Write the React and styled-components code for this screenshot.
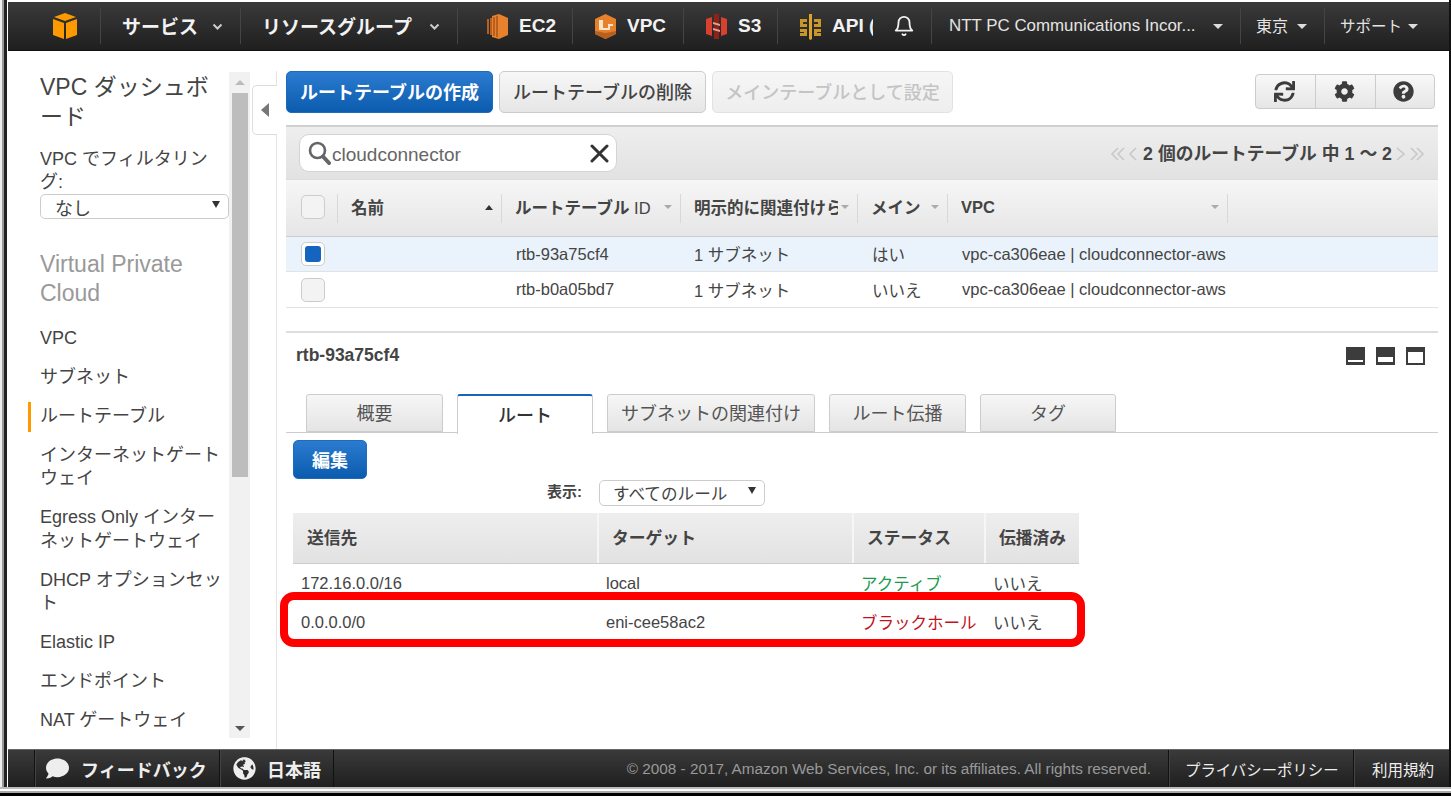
import React from 'react';
import styled, { createGlobalStyle, css } from 'styled-components';
import { FaSync, FaCog, FaQuestionCircle, FaComment, FaGlobeAmericas } from 'react-icons/fa';
import { FiBell } from 'react-icons/fi';

const FONT = '"Liberation Sans", "Noto Sans CJK JP", sans-serif';

const GlobalStyle = createGlobalStyle`
  html, body { margin: 0; padding: 0; background: #fff; }
  body { font-family: ${FONT}; color: #444; overflow: hidden; }
  * { box-sizing: border-box; }
`;

const Frame = styled.div`
  width: 1451px;
  height: 796px;
  padding: 2px 2px 9px 8px;
  display: flex;
  flex-direction: column;
  background:
    linear-gradient(90deg, #eee 0 2px, #999 2px 4px, #222 4px 7px, #fff 7px 1449px, #111 1449px) 0 0 / 100% 787px no-repeat,
    linear-gradient(180deg, #000 0 2px, #fff 2px 787px, #bbb 787px 789px, #fff 789px 791px, #aaa 791px 793px, #000 793px);
`;

const TopBar = styled.nav`
  height: 49px;
  flex: none;
  display: flex;
  align-items: center;
  background: linear-gradient(180deg, #3a3a3a, #1f1f1f);
  border-bottom: 1px solid #111;
  color: #fff;
`;

const NavItem = styled.div`
  width: ${({ $w }) => $w}px;
  height: 36px;
  padding-left: ${({ $pad }) => $pad ?? 21}px;
  flex: none;
  display: flex;
  align-items: center;
  overflow: hidden;
  white-space: nowrap;
  border-right: ${({ $plain }) => ($plain ? 'none' : '1px solid #444')};
  font-size: ${({ $size }) => $size || 19}px;
  font-weight: ${({ $size }) => ($size ? 400 : 700)};
  color: ${({ $size }) => ($size ? '#e4e4e4' : '#f2f2f2')};
`;

const NavLabel = styled.span`
  flex: 1;
  padding-bottom: ${({ $lift }) => ($lift ? 2 : 0)}px;
`;

const NavCaret = styled.span`
  width: 0;
  height: 0;
  flex: none;
  margin-right: ${({ $right }) => $right}px;
  border-left: 5px solid transparent;
  border-right: 5px solid transparent;
  border-top: 5px solid #ddd;
`;

const ChevronSvg = styled.svg`
  width: 11px;
  height: 7px;
  flex: none;
  margin-right: ${({ $right }) => $right}px;
`;

const ServiceIcon = styled.svg`
  width: ${({ $w }) => $w || 23}px;
  height: 27px;
  flex: none;
  margin-right: 10px;
`;

const Body = styled.div`
  flex: 1;
  min-height: 0;
  display: flex;
`;

const Sidebar = styled.aside`
  width: 242px;
  flex: none;
  height: 666px;
  margin-top: 21px;
  display: flex;
  overflow: hidden;
`;

const SideContent = styled.div`
  width: 221px;
  flex: none;
  padding: 0 0 0 32px;
`;

const SideTitle = styled.div`
  font-size: 23px;
  line-height: 29.5px;
  color: #444;
  margin-top: 1px;
`;

const FilterLabel = styled.div`
  font-size: 18px;
  line-height: 23px;
  color: #444;
  margin-top: 16px;
`;

const NativeSelect = styled.div`
  position: relative;
  height: ${({ $h }) => $h}px;
  width: ${({ $w }) => $w}px;
  padding: 3px 0 0 ${({ $pad }) => $pad}px;
  border: 1px solid #ccc;
  border-radius: 5px;
  background: #fff;
  font-size: ${({ $size }) => $size}px;
  line-height: 22px;
  color: #444;
  overflow: hidden;

  &::after {
    content: '';
    position: absolute;
    right: 8px;
    top: 6px;
    border-left: 4px solid transparent;
    border-right: 4px solid transparent;
    border-top: 7px solid #333;
  }
`;

const SideSection = styled.div`
  font-size: 23px;
  line-height: 29px;
  color: #999;
  margin: 31px 0 11px;
`;

const SideItem = styled.div`
  position: relative;
  font-size: 18px;
  line-height: 23.5px;
  padding: 7.75px 0;
  color: #444;

  ${({ $active }) =>
    $active &&
    css`
      &::before {
        content: '';
        position: absolute;
        left: -12px;
        top: 5px;
        bottom: 4px;
        width: 3px;
        background: #f90;
      }
    `}
`;

const ScrollTrack = styled.div`
  width: 21px;
  flex: none;
  background: #f1f1f1;
  display: flex;
  flex-direction: column;
  align-items: center;
`;

const ScrollArrow = styled.div`
  width: 0;
  height: 0;
  flex: none;
  margin: ${({ $down }) => ($down ? 'auto 0 7px' : '8px 0 0')};
  border-left: 5px solid transparent;
  border-right: 5px solid transparent;
  ${({ $down }) => ($down ? 'border-top: 5px solid #555;' : 'border-bottom: 5px solid #bbb;')}
`;

const ScrollThumb = styled.div`
  width: 16px;
  height: 384px;
  flex: none;
  margin-top: 8px;
  background: #bdbdbd;
`;

const Collapse = styled.div`
  width: 27px;
  flex: none;
  margin-top: 20px;
  padding: 14px 0 0 2px;
  border-right: 1px solid #e4e4e4;
`;

const CollapseHandle = styled.div`
  width: 25px;
  height: 50px;
  display: flex;
  align-items: center;
  justify-content: center;
  border: 1px solid #ddd;
  border-right: none;
  border-radius: 5px 0 0 5px;
  background: #fff;
`;

const LeftTriangle = styled.div`
  width: 0;
  height: 0;
  border-top: 7px solid transparent;
  border-bottom: 7px solid transparent;
  border-right: 8px solid #777;
`;

const Main = styled.main`
  width: 1161px;
  flex: none;
  padding: 20px 0 0 9px;
`;

const Toolbar = styled.div`
  width: 1152px;
  height: 42px;
  display: flex;
  align-items: flex-start;
  gap: 6px;
`;

const buttonBase = css`
  display: flex;
  align-items: center;
  justify-content: center;
  padding-bottom: 2px;
  border-radius: 5px;
  font-size: 18px;
  white-space: nowrap;
`;

const PrimaryButton = styled.div`
  ${buttonBase}
  width: ${({ $w }) => $w}px;
  height: ${({ $h }) => $h}px;
  margin: ${({ $m }) => $m || 0};
  background: linear-gradient(180deg, #2b7bd0, #0b5cae);
  border: 1px solid #1d6bbd;
  color: #fff;
  font-weight: 700;
`;

const GrayButton = styled.div`
  ${buttonBase}
  width: ${({ $w }) => $w}px;
  height: 42px;
  background: linear-gradient(180deg, #f7f7f7, #e6e6e6);
  border: 1px solid #ccc;
  color: ${({ $disabled }) => ($disabled ? '#c4c4c4' : '#444')};
  font-weight: 500;
  ${({ $disabled }) => $disabled && 'border-color: #e2e2e2; background: linear-gradient(180deg, #f6f6f6, #eee);'}
`;

const IconGroup = styled.div`
  display: flex;
  margin: 3px 3px 0 auto;
  height: 35px;
  border: 1px solid #ccc;
  border-radius: 4px;
  background: linear-gradient(180deg, #f8f8f8, #e6e6e6);
`;

const IconCell = styled.div`
  width: 59.3px;
  padding-right: 2px;
  display: flex;
  align-items: center;
  justify-content: center;
  color: #3c3c3c;
  font-size: 21px;

  & + & {
    border-left: 1px solid #ccc;
  }
`;

const FilterBar = styled.div`
  margin-top: 12px;
  width: 1152px;
  height: 55px;
  padding: 7px 12px 0 13px;
  display: flex;
  align-items: flex-start;
  border-top: 2px solid #d0d0d0;
  border-bottom: 1px solid #ddd;
  background: linear-gradient(180deg, #eee, #e2e2e2);
`;

const SearchBox = styled.div`
  width: 318px;
  height: 38px;
  padding: 0 7px 0 8px;
  display: flex;
  align-items: center;
  border: 1px solid #d4d4d4;
  border-radius: 10px;
  background: #fff;
  color: #666;
  font-size: 19px;
`;

const SearchText = styled.span`
  flex: 1;
  margin-left: 1px;
  padding-top: 3px;
`;

const Pager = styled.div`
  margin: 8px 0 0 auto;
  display: flex;
  align-items: center;
  font-size: 17.8px;
  line-height: 24px;
  font-weight: 700;
  color: #444;
`;

const PagerChevrons = styled.svg`
  width: 30px;
  height: 18px;
  flex: none;
  margin: ${({ $right }) => ($right ? '0 0 0 4px' : '0 3px 0 0')};
`;

const listColumns = '52px 164px 179px 177px 90px 280px 1fr';

const ListHead = styled.div`
  display: grid;
  grid-template-columns: ${listColumns};
  width: 1152px;
  height: 57px;
  border-bottom: 1px solid #ccc;
  background: linear-gradient(180deg, #f6f6f6, #e6e6e6);
`;

const HeadCell = styled.div`
  position: relative;
  display: flex;
  align-items: center;
  padding: 0 9px 2px 13px;
  font-size: 16.5px;
  font-weight: 700;
  color: #444;
  white-space: nowrap;
  overflow: hidden;

  &::after {
    content: '';
    display: ${({ $last }) => ($last ? 'none' : 'block')};
    position: absolute;
    right: 0;
    top: 14px;
    height: 29px;
    width: 1px;
    background: #d8d8d8;
    box-shadow: 1px 0 0 #fff;
  }
`;

const HeadLabel = styled.span`
  flex: 1;
  overflow: hidden;
`;

const HeadId = styled.span`
  font-weight: 400;
`;

const SortCaret = styled.span`
  width: 0;
  height: 0;
  flex: none;
  margin-left: 3px;
  border-left: 4px solid transparent;
  border-right: 4px solid transparent;
  ${({ $up }) => ($up ? 'border-bottom: 5px solid #333;' : 'border-top: 4px solid #aaa;')}
`;

const Check = styled.div`
  width: 24px;
  height: 24px;
  margin-left: 2px;
  padding: 3px;
  border: 1px solid #ccc;
  border-radius: 5px;
  background: ${({ $on }) => ($on ? '#fff' : '#f3f3f3')};
`;

const CheckFill = styled.div`
  width: 100%;
  height: 100%;
  border-radius: 3px;
  background: #1565c0;
`;

const ListRow = styled.div`
  display: grid;
  grid-template-columns: ${listColumns};
  width: 1152px;
  height: ${({ $h }) => $h}px;
  align-items: center;
  border-bottom: 1px solid #e2e2e2;
  background: ${({ $selected }) => ($selected ? '#eaf3fb' : '#fff')};
  font-size: 16.5px;
  color: #444;
  white-space: nowrap;
`;

const ListCell = styled.div`
  padding-left: ${({ $pad }) => $pad ?? 14}px;
  overflow: visible;
`;

const Detail = styled.section`
  margin-top: 23px;
  width: 1152px;
  border-top: 2px solid #ddd;
`;

const DetailHead = styled.div`
  height: 61px;
  padding: 0 13px 16px 10px;
  display: flex;
  align-items: center;
  justify-content: space-between;
  font-size: 17.5px;
  font-weight: 700;
  color: #444;
`;

const PaneIcons = styled.div`
  display: flex;
  gap: 11px;
  margin-top: 1px;
`;

const PaneIcon = styled.svg`
  width: 19px;
  height: 18px;
`;

const Tabs = styled.div`
  height: 39px;
  padding-left: 20px;
  display: flex;
  gap: 14px;
  border-bottom: 1px solid #ccc;
`;

const Tab = styled.div`
  width: ${({ $w }) => $w}px;
  height: ${({ $active }) => ($active ? 40 : 38)}px;
  padding-bottom: 3px;
  display: flex;
  align-items: center;
  justify-content: center;
  border: 1px solid #ccc;
  border-radius: 3px 3px 0 0;
  font-size: 18px;
  color: ${({ $active }) => ($active ? '#333' : '#555')};
  font-weight: ${({ $active }) => ($active ? 500 : 400)};
  background: ${({ $active }) => ($active ? '#fff' : 'linear-gradient(180deg, #f6f6f6, #e4e4e4)')};
  ${({ $active }) => $active && 'border-top: 2px solid #1166bb; border-bottom: none; z-index: 1;'}
`;

const ShowRow = styled.div`
  margin: 1px 0 0 261px;
  display: flex;
  gap: 17px;
`;

const ShowLabel = styled.div`
  font-size: 15px;
  line-height: 24px;
  font-weight: 700;
  color: #444;
`;

const RoutesTable = styled.div`
  position: relative;
  width: 786px;
  margin: 7px 0 0 7px;
`;

const routeColumns = '305px 255px 132px 94px';

const RouteHead = styled.div`
  display: grid;
  grid-template-columns: ${routeColumns};
  height: 51px;
  border-bottom: 1px solid #ccc;
  background: linear-gradient(180deg, #eee, #e2e2e2);
`;

const RouteHeadCell = styled.div`
  display: flex;
  align-items: center;
  padding: 0 0 3px 14px;
  font-size: 16.8px;
  font-weight: 700;
  color: #444;
  white-space: nowrap;

  & + & {
    margin-left: -1px;
    padding-left: 13px;
    border-left: 2px solid #f6f6f6;
  }
`;

const RouteRow = styled.div`
  display: grid;
  grid-template-columns: ${routeColumns};
  height: 39px;
  align-items: center;
  font-size: 16.5px;
  color: #444;
  white-space: nowrap;
`;

const RouteCell = styled.div`
  padding-left: 8px;
  color: ${({ $color }) => $color || '#444'};
`;

const RouteJp = styled(RouteCell)`
  padding-bottom: 2px;
`;

const Highlight = styled.div`
  position: absolute;
  left: -13px;
  top: 79px;
  width: 805px;
  height: 55px;
  border: 8px solid #f00;
  border-radius: 14px;
`;

const Footer = styled.footer`
  height: 38px;
  flex: none;
  display: flex;
  align-items: stretch;
  padding-left: 26px;
  border-top: 1px solid #666;
  background: linear-gradient(180deg, #3a3a3a, #1f1f1f);
`;

const FootItem = styled.div`
  width: ${({ $w }) => $w}px;
  flex: none;
  display: flex;
  align-items: center;
  padding-left: ${({ $pad }) => $pad}px;
  border-left: 1px solid #111;
  box-shadow: inset 1px 0 0 #444;
  font-size: ${({ $size }) => $size || 18}px;
  font-weight: ${({ $bold }) => ($bold ? 700 : 400)};
  color: #eee;
  white-space: nowrap;
`;

const FootIconSlot = styled.span`
  display: flex;
  font-size: 23px;
  margin-right: ${({ $gap }) => $gap}px;
`;

const Copyright = styled.div`
  flex: 1;
  display: flex;
  align-items: center;
  justify-content: flex-end;
  padding-right: 17px;
  font-size: 15.3px;
  color: #999;
  white-space: nowrap;
`;

const Chevron = ({ right }) => (
  <ChevronSvg $right={right} viewBox="0 0 11 7">
    <path d="M1.5 1.5 L5.5 5.5 L9.5 1.5" fill="none" stroke="#ccc" strokeWidth="2" />
  </ChevronSvg>
);

const AwsLogo = () => (
  <svg width="26" height="28" viewBox="0 0 26 28">
    <path d="M13 1 L24 5 L13 9 L2 5 Z" fill="#f90" />
    <path d="M1 7 L12 11 V27 L1 23 Z" fill="#f90" />
    <path d="M25 7 L14 11 V27 L25 23 Z" fill="#f90" />
  </svg>
);

const Ec2Icon = () => (
  <ServiceIcon viewBox="0 0 23 27">
    <path d="M6 3 L13 1 L22 5 V22 L13 26 L6 24 Z" fill="#e8812c" />
    <path d="M1 6 H3 V21 H1 Z M4 5 H6 V22 H4 Z M7 4 H9 V23 H7 Z M10 3 H12 V24 H10 Z" fill="#b8601f" />
  </ServiceIcon>
);

const VpcIcon = () => (
  <ServiceIcon viewBox="0 0 23 27">
    <path d="M11.5 1 L22 6 V21 L11.5 26 L1 21 V6 Z" fill="#e8812c" />
    <path d="M5 7 H9 V15 H14 V11 H19 V13 H16 V17 H5 Z" fill="#fbe3c8" />
    <path d="M1 18 L11.5 20 L22 18 V21 L11.5 26 L1 21 Z" fill="#b8601f" />
  </ServiceIcon>
);

const S3Icon = () => (
  <ServiceIcon viewBox="0 0 23 27">
    <path d="M1 6 L7 4 V23 L1 21 Z M16 4 L22 6 V21 L16 23 Z" fill="#d9412f" />
    <path d="M9 1 L14 1 V26 L9 26 Z" fill="#8c2318" />
    <path d="M8 9 L15 11 V13 L8 11 Z M8 15 L15 17 V19 L8 17 Z" fill="#e8a090" />
  </ServiceIcon>
);

const ApiIcon = () => (
  <ServiceIcon viewBox="0 0 23 27">
    <path d="M10 1 H13 V26 L11.5 27 L10 26 Z" fill="#d9a32e" />
    <path d="M1 6 H8 V9 H4 V11 H8 V14 H1 Z M22 6 H15 V9 H19 V11 H15 V14 H22 Z M1 16 H8 V23 H1 V20 H5 V19 H1 Z M22 16 H15 V23 H22 V20 H18 V19 H22 Z" fill="#c9962a" />
  </ServiceIcon>
);

const Pane = ({ top, bottom }) => (
  <PaneIcon viewBox="0 0 19 18">
    <rect width="19" height="18" fill="#3c3c3c" />
    <rect x="2" y={top} width="15" height={bottom} fill="#fff" />
  </PaneIcon>
);

const SearchIcon = () => (
  <svg width="23" height="24" viewBox="0 0 23 24" fill="none" stroke="#666" strokeLinecap="round">
    <circle cx="9.5" cy="9.5" r="7.5" strokeWidth="2.6" />
    <path d="M15 15.5 L21 22" strokeWidth="4" />
  </svg>
);

const ClearIcon = () => (
  <svg width="19" height="19" viewBox="0 0 19 19" stroke="#333" strokeWidth="3" strokeLinecap="round">
    <path d="M2 2 L17 17 M17 2 L2 17" />
  </svg>
);

// ≪‹ on the left of the pager, mirrored on the right
const PagerArrows = ({ right }) => (
  <PagerChevrons $right={right} viewBox="0 0 30 18" fill="none" stroke="#c8c8c8" strokeWidth="1.6">
    {right ? (
      <path d="M1 3 L8 9 L1 15 M15 3 L21 9 L15 15 M21 3 L27 9 L21 15" />
    ) : (
      <path d="M8 3 L2 9 L8 15 M14 3 L8 9 L14 15 M26 3 L20 9 L26 15" />
    )}
  </PagerChevrons>
);

const sideItems = [
  { label: 'VPC' },
  { label: 'サブネット' },
  { label: 'ルートテーブル', active: true },
  { label: 'インターネットゲートウェイ' },
  { label: 'Egress Only インターネットゲートウェイ' },
  { label: 'DHCP オプションセット' },
  { label: 'Elastic IP' },
  { label: 'エンドポイント' },
  { label: 'NAT ゲートウェイ' },
];

const listRows = [
  { id: 'rtb-93a75cf4', main: 'はい', selected: true, h: 35 },
  { id: 'rtb-b0a05bd7', main: 'いいえ', h: 36 },
];

const tabs = [
  { label: '概要', w: 137 },
  { label: 'ルート', w: 136, active: true },
  { label: 'サブネットの関連付け', w: 208 },
  { label: 'ルート伝播', w: 137 },
  { label: 'タグ', w: 136 },
];

const routes = [
  { dest: '172.16.0.0/16', target: 'local', status: 'アクティブ', color: '#1d9a4b' },
  { dest: '0.0.0.0/0', target: 'eni-cee58ac2', status: 'ブラックホール', color: '#c0121c' },
];

export default function App() {
  return (
    <Frame>
      <GlobalStyle />
      <TopBar>
        <NavItem $w={93} $pad={44}><AwsLogo /></NavItem>
        <NavItem $w={140}><NavLabel $lift>サービス</NavLabel><Chevron right={17} /></NavItem>
        <NavItem $w={217}><NavLabel $lift>リソースグループ</NavLabel><Chevron right={17} /></NavItem>
        <NavItem $w={115} $pad={28}><Ec2Icon />EC2</NavItem>
        <NavItem $w={111}><VpcIcon />VPC</NavItem>
        <NavItem $w={94}><S3Icon />S3</NavItem>
        <NavItem $w={95} $plain><ApiIcon />API (</NavItem>
        <NavItem $w={59} $pad={20}><FiBell size={22} /></NavItem>
        <NavItem $w={309} $size={16.9} $pad={17}><NavLabel>NTT PC Communications Incor...</NavLabel><NavCaret $right={17} /></NavItem>
        <NavItem $w={84} $size={16} $pad={15}><NavLabel $lift>東京</NavLabel><NavCaret $right={17} /></NavItem>
        <NavItem $w={110} $size={15.5} $plain $pad={15}><NavLabel $lift>サポート</NavLabel><NavCaret $right={17} /></NavItem>
      </TopBar>
      <Body>
        <Sidebar>
          <SideContent>
            <SideTitle>VPC ダッシュボード</SideTitle>
            <FilterLabel>VPC でフィルタリング:</FilterLabel>
            <NativeSelect $w={189} $h={25} $pad={14} $size={18}>なし</NativeSelect>
            <SideSection>Virtual Private Cloud</SideSection>
            {sideItems.map((item) => (
              <SideItem key={item.label} $active={item.active}>{item.label}</SideItem>
            ))}
          </SideContent>
          <ScrollTrack>
            <ScrollArrow />
            <ScrollThumb />
            <ScrollArrow $down />
          </ScrollTrack>
        </Sidebar>
        <Collapse>
          <CollapseHandle><LeftTriangle /></CollapseHandle>
        </Collapse>
        <Main>
          <Toolbar>
            <PrimaryButton $w={207} $h={42}>ルートテーブルの作成</PrimaryButton>
            <GrayButton $w={207}>ルートテーブルの削除</GrayButton>
            <GrayButton $w={241} $disabled>メインテーブルとして設定</GrayButton>
            <IconGroup>
              <IconCell><FaSync /></IconCell>
              <IconCell><FaCog /></IconCell>
              <IconCell><FaQuestionCircle /></IconCell>
            </IconGroup>
          </Toolbar>
          <FilterBar>
            <SearchBox>
              <SearchIcon />
              <SearchText>cloudconnector</SearchText>
              <ClearIcon />
            </SearchBox>
            <Pager>
              <PagerArrows />
              <span>2 個のルートテーブル 中 1 ～ 2</span>
              <PagerArrows right />
            </Pager>
          </FilterBar>
          <ListHead>
            <HeadCell><Check /></HeadCell>
            <HeadCell><HeadLabel>名前</HeadLabel><SortCaret $up /></HeadCell>
            <HeadCell><HeadLabel>ルートテーブル <HeadId>ID</HeadId></HeadLabel><SortCaret /></HeadCell>
            <HeadCell><HeadLabel>明示的に関連付けら</HeadLabel><SortCaret /></HeadCell>
            <HeadCell><HeadLabel>メイン</HeadLabel><SortCaret /></HeadCell>
            <HeadCell><HeadLabel>VPC</HeadLabel><SortCaret /></HeadCell>
            <HeadCell $last />
          </ListHead>
          {listRows.map((row) => (
            <ListRow key={row.id} $selected={row.selected} $h={row.h}>
              <ListCell $pad={13}>
                <Check $on={row.selected}>{row.selected && <CheckFill />}</Check>
              </ListCell>
              <ListCell />
              <ListCell>{row.id}</ListCell>
              <ListCell $pad={13}>1 サブネット</ListCell>
              <ListCell>{row.main}</ListCell>
              <ListCell>vpc-ca306eae | cloudconnector-aws</ListCell>
              <ListCell />
            </ListRow>
          ))}
          <Detail>
            <DetailHead>
              rtb-93a75cf4
              <PaneIcons>
                <Pane top={13} bottom={2} />
                <Pane top={10} bottom={5} />
                <Pane top={5} bottom={11} />
              </PaneIcons>
            </DetailHead>
            <Tabs>
              {tabs.map((tab) => (
                <Tab key={tab.label} $w={tab.w} $active={tab.active}>{tab.label}</Tab>
              ))}
            </Tabs>
            <PrimaryButton $w={74} $h={39} $m="7px 0 0 7px">編集</PrimaryButton>
            <ShowRow>
              <ShowLabel>表示:</ShowLabel>
              <NativeSelect $w={166} $h={26} $pad={13} $size={16.6}>すべてのルール</NativeSelect>
            </ShowRow>
            <RoutesTable>
              <RouteHead>
                <RouteHeadCell>送信先</RouteHeadCell>
                <RouteHeadCell>ターゲット</RouteHeadCell>
                <RouteHeadCell>ステータス</RouteHeadCell>
                <RouteHeadCell>伝播済み</RouteHeadCell>
              </RouteHead>
              {routes.map((route) => (
                <RouteRow key={route.dest}>
                  <RouteCell>{route.dest}</RouteCell>
                  <RouteCell>{route.target}</RouteCell>
                  <RouteJp $color={route.color}>{route.status}</RouteJp>
                  <RouteJp>いいえ</RouteJp>
                </RouteRow>
              ))}
              <Highlight />
            </RoutesTable>
          </Detail>
        </Main>
      </Body>
      <Footer>
        <FootItem $w={185} $pad={11} $bold>
          <FootIconSlot $gap={12}><FaComment /></FootIconSlot>フィードバック
        </FootItem>
        <FootItem $w={114} $pad={13} $bold>
          <FootIconSlot $gap={11}><FaGlobeAmericas /></FootIconSlot>日本語
        </FootItem>
        <FootItem $w={1} $pad={0} />
        <Copyright>© 2008 - 2017, Amazon Web Services, Inc. or its affiliates. All rights reserved.</Copyright>
        <FootItem $w={185} $pad={16} $size={15.4}>プライバシーポリシー</FootItem>
        <FootItem $w={96} $pad={18} $size={15.5}>利用規約</FootItem>
      </Footer>
    </Frame>
  );
}
